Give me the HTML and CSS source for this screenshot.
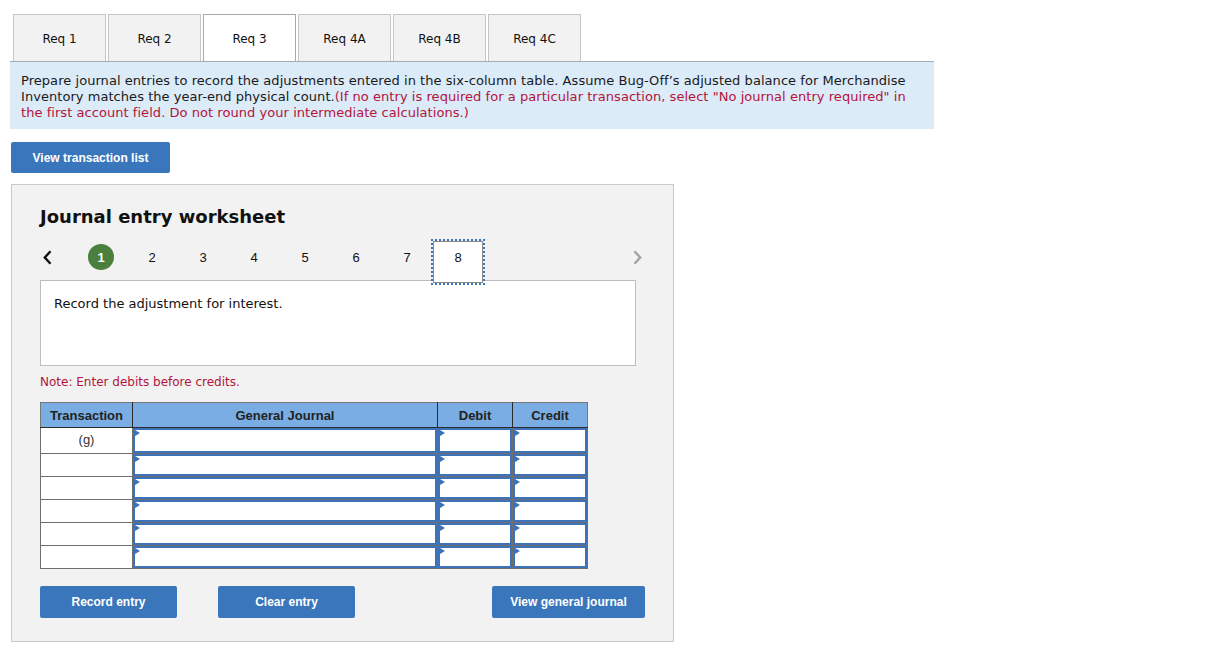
FILE: index.html
```html
<!DOCTYPE html>
<html>
<head>
<meta charset="utf-8">
<link rel="stylesheet" href="styles.css">
</head>
<body>
<div class="page">
  <div class="tabs">
    <div class="tab">Req 1</div>
    <div class="tab">Req 2</div>
    <div class="tab active">Req 3</div>
    <div class="tab">Req 4A</div>
    <div class="tab">Req 4B</div>
    <div class="tab">Req 4C</div>
  </div>
  <div class="instructions">
    <span>Prepare journal entries to record the adjustments entered in the six-column table. Assume Bug-Off’s adjusted balance for Merchandise Inventory matches the year-end physical count.</span><span class="red">(If no entry is required for a particular transaction, select "No journal entry required" in the first account field. Do not round your intermediate calculations.)</span>
  </div>
  <button class="btn btn-list">View transaction list</button>
  <div class="worksheet">
    <h2 class="ws-title">Journal entry worksheet</h2>
    <div class="pager">
      <div class="nav prev"><svg width="11" height="15" viewBox="0 0 11 15"><path d="M8.5 1.2 L2.8 7.5 L8.5 13.8" fill="none" stroke="#111" stroke-width="2.4"/></svg></div>
      <div class="pg"><span class="circle">1</span></div>
      <div class="pg">2</div>
      <div class="pg">3</div>
      <div class="pg">4</div>
      <div class="pg">5</div>
      <div class="pg">6</div>
      <div class="pg">7</div>
      <div class="pg current">8</div>
      <div class="nav next"><svg width="11" height="15" viewBox="0 0 11 15"><path d="M2.5 1.2 L8.2 7.5 L2.5 13.8" fill="none" stroke="#a3a3a3" stroke-width="2.4"/></svg></div>
    </div>
    <div class="desc">Record the adjustment for interest.</div>
    <div class="note">Note: Enter debits before credits.</div>
    <table class="journal">
      <colgroup><col class="c1"><col class="c2"><col class="c3"><col class="c4"></colgroup>
      <thead>
        <tr><th>Transaction</th><th>General Journal</th><th>Debit</th><th>Credit</th></tr>
      </thead>
      <tbody>
        <tr class="first"><td class="tx">(g)</td><td class="in"><div class="field"></div></td><td class="in"><div class="field"></div></td><td class="in"><div class="field"></div></td></tr>
        <tr><td class="tx"></td><td class="in"><div class="field"></div></td><td class="in"><div class="field"></div></td><td class="in"><div class="field"></div></td></tr>
        <tr><td class="tx"></td><td class="in"><div class="field"></div></td><td class="in"><div class="field"></div></td><td class="in"><div class="field"></div></td></tr>
        <tr><td class="tx"></td><td class="in"><div class="field"></div></td><td class="in"><div class="field"></div></td><td class="in"><div class="field"></div></td></tr>
        <tr><td class="tx"></td><td class="in"><div class="field"></div></td><td class="in"><div class="field"></div></td><td class="in"><div class="field"></div></td></tr>
        <tr><td class="tx"></td><td class="in"><div class="field"></div></td><td class="in"><div class="field"></div></td><td class="in"><div class="field"></div></td></tr>
      </tbody>
    </table>
    <div class="actions">
      <button class="btn btn-action">Record entry</button>
      <button class="btn btn-action">Clear entry</button>
      <button class="btn btn-action btn-view">View general journal</button>
    </div>
  </div>
</div>
</body>
</html>
```
FILE: styles.css
```css
* { box-sizing: border-box; }
body {
  margin: 0;
  background: #fff;
  font-family: "DejaVu Sans", Verdana, sans-serif;
  color: #1a1a1a;
}
.page {
  padding: 14px 0 0 10px;
  width: 934px;
}
.tabs {
  display: flex;
  gap: 2px;
  margin-left: 3px;
  height: 47px;
}
.tab {
  width: 93px;
  height: 47px;
  border: 1px solid #c6c6c6;
  border-bottom: 0;
  background: #f2f2f2;
  font-size: 12px;
  color: #111;
  display: flex;
  align-items: center;
  justify-content: center;
  padding-top: 2px;
}
.tab.active {
  background: #fff;
  border-color: #a8a8a8;
}
.instructions {
  border-top: 1px solid #ababab;
  background: #dcebf8;
  padding: 11px 11px 8px 11px;
  font-size: 13px;
  line-height: 16px;
  letter-spacing: 0.05px;
  color: #1a1a1a;
}
.red { color: #b3143c; }
.btn {
  border: 0;
  border-radius: 2px;
  background: #3a76bb;
  color: #fff;
  font-family: "Liberation Sans", Arial, sans-serif;
  font-weight: bold;
  font-size: 12px;
  padding: 0;
  cursor: pointer;
}
.btn-list {
  display: block;
  margin: 13px 0 0 1px;
  width: 159px;
  height: 31px;
}
.worksheet {
  margin: 11px 0 0 1px;
  width: 663px;
  height: 458px;
  background: #f2f2f2;
  border: 1px solid #c9c9c9;
  padding: 0 28px 0 28px;
}
.ws-title {
  margin: 0;
  padding-top: 20px;
  font-size: 18px;
  line-height: 24px;
  font-weight: bold;
  color: #111;
}
.pager {
  margin-top: 12px;
  height: 39px;
  display: flex;
  align-items: flex-start;
}
.nav {
  height: 32px;
  display: flex;
  align-items: center;
}
.prev { width: 35.5px; padding-left: 2px; }
.next { margin-left: auto; padding-right: 2px; }
.pg {
  width: 51px;
  height: 32px;
  display: flex;
  align-items: center;
  justify-content: center;
  font-family: "Liberation Sans", Arial, sans-serif;
  font-size: 13px;
  color: #111;
}
.circle {
  width: 26px;
  height: 26px;
  border-radius: 50%;
  background: #4b7f3e;
  color: #fff;
  font-weight: bold;
  display: flex;
  align-items: center;
  justify-content: center;
}
.pg.current {
  width: 50px;
  margin-left: 0.5px;
  height: 42px;
  padding-bottom: 10px;
  background: #fff;
  border: 1px solid #8a8a8a;
  outline: 2px dotted #3d74ba;
  position: relative;
  z-index: 1;
}
.desc {
  width: 596px;
  height: 86px;
  background: #fff;
  border: 1px solid #bdbdbd;
  padding: 14px 13px;
  font-size: 13px;
  line-height: 17px;
  color: #111;
}
.note {
  margin-top: 9px;
  font-size: 12px;
  line-height: 15px;
  color: #b3143c;
}
.journal {
  margin-top: 12px;
  border-collapse: collapse;
  width: 547px;
  table-layout: fixed;
  font-family: "Liberation Sans", Arial, sans-serif;
  font-size: 13px;
}
.c1 { width: 92px; }
.c2 { width: 305px; }
.c3 { width: 75px; }
.c4 { width: 75px; }
.journal th {
  height: 25px;
  background: #79ade3;
  color: #222;
  font-weight: bold;
  border: 1px solid #2b2b2b;
  border-top-color: #777;
  padding: 0;
}
.journal th:first-child { border-left-color: #777; }
.journal th:last-child { border-right-color: #777; }
.journal td {
  height: 23px;
  border: 1px solid #6e6e6e;
  padding: 0;
  background: #fff;
}
.journal tr.first td { height: 26px; }
.journal td.tx {
  text-align: center;
  vertical-align: top;
  padding-top: 4px;
  color: #333;
}
.field {
  height: 100%;
  min-height: 21px;
  border: 2px solid #3d72b8;
  position: relative;
}
.journal tr.first .field { min-height: 24px; }
.field::before {
  content: "";
  position: absolute;
  left: 0;
  top: 0;
  border-top: 3px solid transparent;
  border-bottom: 3px solid transparent;
  border-left: 5px solid #3d72b8;
}
.actions {
  margin-top: 17px;
  display: flex;
  gap: 41px;
}
.btn-action {
  width: 137px;
  height: 32px;
}
.btn-view {
  width: 153px;
  margin-left: auto;
}
```
